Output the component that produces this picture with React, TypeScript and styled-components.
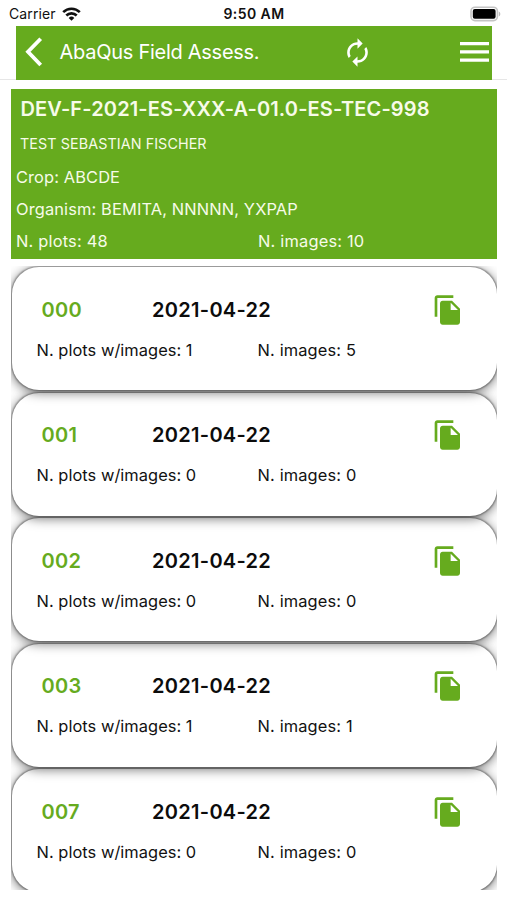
import React from 'react';
import styled, { createGlobalStyle } from 'styled-components';
import { MdAutorenew, MdFileCopy } from 'react-icons/md';

const GREEN = '#66ab1e';

const GlobalStyle = createGlobalStyle`
  * { box-sizing: border-box; }
  body { margin: 0; background: #fff; font-family: Inter, "Liberation Sans", sans-serif; }
`;

const Screen = styled.div`
  width: 507px;
  height: 900px;
  overflow: hidden;
  background: #fff;
`;

const Label = styled.span<{ $size: number; $weight?: number; $spacing?: number; $color?: string }>`
  font-size: ${(p) => p.$size}px;
  font-weight: ${(p) => p.$weight ?? 400};
  letter-spacing: ${(p) => p.$spacing ?? 0}px;
  color: ${(p) => p.$color ?? 'inherit'};
  white-space: pre;
`;

const StatusBar = styled.div`
  display: grid;
  grid-template-columns: 1fr auto 1fr;
  height: 25px;
  padding: 2px 8px 0 9px;
  align-items: center;
  color: #111;
`;

const Carrier = styled.div`
  display: flex;
  align-items: center;
  gap: 6px;
`;

const BatteryIcon = styled.svg`
  justify-self: end;
  margin-right: -2px;
`;

const HeaderArea = styled.div`
  height: 55px;
  padding: 0.5px 15px 0;
  border-bottom: 1px solid #e6e6e6;
`;

const Header = styled.header`
  display: flex;
  align-items: center;
  height: 54px;
  margin: 0 0 -1px 0.5px;
  padding: 0 3px 1px 9px;
  background: ${GREEN};
  color: #fff;
`;

const Title = styled.div`
  width: 285px;
  padding-left: 17px;
  line-height: 24px;
`;

const RefreshButton = styled.div`
  display: flex;
  flex: 1;
  margin-left: 14px;
`;

const Summary = styled.section`
  height: 170px;
  margin: 9px 10px 0 11px;
  padding: 3px 5px 0;
  background: ${GREEN};
  color: #f7fbe9;
`;

const SummaryLine = styled.div<{ $height: number; $indent?: number }>`
  display: grid;
  grid-template-columns: 242px 1fr;
  align-items: center;
  height: ${(p) => p.$height}px;
  padding-left: ${(p) => p.$indent ?? 0}px;
`;

const List = styled.main`
  display: flex;
  flex-direction: column;
  height: 624px;
  margin: 7px 10px 0 11px;
  padding: 1px 0.5px 0 1px;
  overflow: hidden;
`;

const Card = styled.article<{ $order: number }>`
  position: relative;
  z-index: ${(p) => p.$order};
  flex: none;
  height: 123px;
  margin-bottom: 2.5px;
  padding: 26.5px 33px 0 24.5px;
  border-radius: 27px;
  background: #fff;
  box-shadow: 0 0 1.5px 0.5px rgba(0, 0, 0, 0.3), 0 2px 11px 1px rgba(0, 0, 0, 0.5);
`;

const CardTop = styled.div`
  display: grid;
  grid-template-columns: 110.5px 1fr auto;
  align-items: center;
  height: 32px;
  padding-left: 5px;
`;

const CardBottom = styled.div`
  display: grid;
  grid-template-columns: 221px 1fr;
  align-items: center;
  height: 48px;
`;

const records = [
  { id: '000', plots: 1, images: 5 },
  { id: '001', plots: 0, images: 0 },
  { id: '002', plots: 0, images: 0 },
  { id: '003', plots: 1, images: 1 },
  { id: '007', plots: 0, images: 0 },
];

function Wifi() {
  return (
    <svg width="19" height="14" viewBox="0 0 19 14" fill="none" stroke="#111" strokeWidth="2.6">
      <path d="M1.2 5.2a11.8 11.8 0 0 1 16.6 0" />
      <path d="M4.3 8.5a7.4 7.4 0 0 1 10.4 0" />
      <path d="M9.5 13.7 6.7 10.9a4 4 0 0 1 5.6 0Z" fill="#111" stroke="none" />
    </svg>
  );
}

function Battery() {
  return (
    <BatteryIcon width="31" height="16" viewBox="0 0 31 16">
      <rect x="1" y="1.2" width="26.4" height="13.4" rx="4" fill="#fff" stroke="#c4c4c4" strokeWidth="1.6" />
      <rect x="2.8" y="3" width="22.8" height="9.8" rx="2" fill="#000" />
      <path d="M28.8 5.500c2 .7 2 4.300 0 5Z" fill="#bbb" />
    </BatteryIcon>
  );
}

export default function App() {
  return (
    <Screen>
      <GlobalStyle />
      <StatusBar>
        <Carrier>
          <Label $size={14} $spacing={0.1}>Carrier</Label>
          <Wifi />
        </Carrier>
        <Label $size={14} $weight={600} $spacing={0.42}>9:50 AM</Label>
        <Battery />
      </StatusBar>
      <HeaderArea>
        <Header>
          <svg width="18" height="30" viewBox="0 0 18 30" fill="none" stroke="#fff" strokeWidth="3.8">
            <path d="M15.700 1.700 3 14.800 15.700 28" />
          </svg>
          <Title>
            <Label $size={20} $spacing={-0.27}>AbaQus Field Assess.</Label>
          </Title>
          <RefreshButton>
            <MdAutorenew size={31} />
          </RefreshButton>
          <svg width="29" height="20" viewBox="0 0 29 20" fill="#fff">
            <path d="M0 0h29v3.300H0zM0 8.200h29v3.300H0zM0 16.400h29v3.300H0z" />
          </svg>
        </Header>
      </HeaderArea>
      <Summary>
        <SummaryLine $height={34} $indent={4.5}>
          <Label $size={20} $weight={600} $spacing={0.14}>DEV-F-2021-ES-XXX-A-01.0-ES-TEC-998</Label>
        </SummaryLine>
        <SummaryLine $height={35} $indent={4}>
          <Label $size={14.3} $spacing={0.1}>TEST SEBASTIAN FISCHER</Label>
        </SummaryLine>
        <SummaryLine $height={32}>
          <Label $size={16.4} $spacing={0.12}>Crop: ABCDE</Label>
        </SummaryLine>
        <SummaryLine $height={32}>
          <Label $size={16.4} $spacing={0.14}>Organism: BEMITA, NNNNN, YXPAP</Label>
        </SummaryLine>
        <SummaryLine $height={31}>
          <Label $size={16.4} $spacing={0.2}>N. plots: 48</Label>
          <Label $size={16.4} $spacing={0.2}>N. images: 10</Label>
        </SummaryLine>
      </Summary>
      <List>
        {records.map((r, i) => (
          <Card key={r.id} $order={records.length - i}>
            <CardTop>
              <Label $size={20} $weight={600} $spacing={0.3} $color={GREEN}>{r.id}</Label>
              <Label $size={20} $weight={600} $spacing={0.3} $color="#0c0c0c">2021-04-22</Label>
              <MdFileCopy size={32} color={GREEN} />
            </CardTop>
            <CardBottom>
              <Label $size={16.4} $spacing={0.05} $color="#111">{`N. plots w/images: ${r.plots}`}</Label>
              <Label $size={16.4} $spacing={0.15} $color="#111">{`N. images: ${r.images}`}</Label>
            </CardBottom>
          </Card>
        ))}
      </List>
    </Screen>
  );
}
